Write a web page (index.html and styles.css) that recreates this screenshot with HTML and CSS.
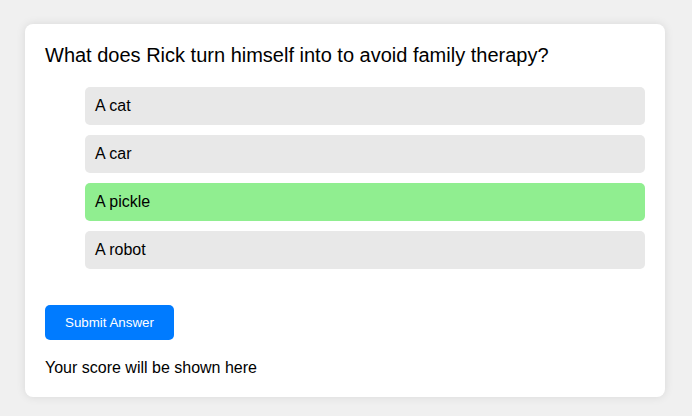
FILE: index.html
```html
<!DOCTYPE html>
<html>
<head>
<meta charset="utf-8">
<link rel="stylesheet" href="styles.css">
</head>
<body>
<div class="quiz">
  <h2 class="question">What does Rick turn himself into to avoid family therapy?</h2>
  <ul class="options">
    <li class="option">A cat</li>
    <li class="option">A car</li>
    <li class="option selected">A pickle</li>
    <li class="option">A robot</li>
  </ul>
  <button class="submit">Submit Answer</button>
  <p class="score">Your score will be shown here</p>
</div>
</body>
</html>
```

FILE: styles.css
```css
html, body {
  margin: 0;
  background: #f0f0f0;
}
body {
  padding: 24px 25px;
  font-family: "Liberation Sans", Arial, sans-serif;
  color: #000;
}
.quiz {
  width: 600px;
  background: #fff;
  padding: 20px;
  border-radius: 8px;
  box-shadow: 0 0 10px rgba(0, 0, 0, 0.1);
}
.question {
  margin: 0 0 20px;
  font-size: 20px;
  font-weight: normal;
  line-height: 23px;
}
.options {
  list-style: none;
  margin: 0 0 36px;
  padding: 0 0 0 40px;
  display: flex;
  flex-direction: column;
  gap: 10px;
}
.option {
  background: #e8e8e8;
  padding: 10px;
  border-radius: 5px;
  font-size: 16px;
  line-height: 18px;
}
.option.selected {
  background: #90ee90;
}
.submit {
  display: block;
  background: #007bff;
  color: #fff;
  border: none;
  border-radius: 5px;
  padding: 10px 20px;
  font-family: "Liberation Sans", Arial, sans-serif;
  font-size: 13.333px;
  line-height: 15px;
}
.score {
  margin: 19px 0 0;
  font-size: 16px;
  line-height: 18px;
}
```
